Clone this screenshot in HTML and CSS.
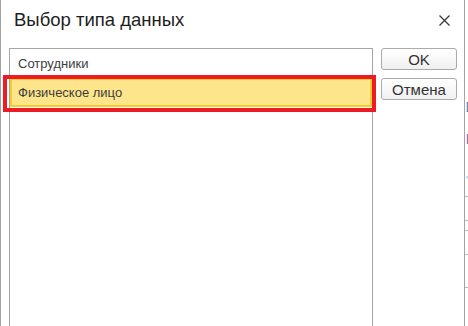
FILE: index.html
```html
<!DOCTYPE html>
<html>
<head>
  <meta charset="utf-8">
  <meta name="viewport" content="width=device-width">
  <title>Выбор типа данных</title>
  <link rel="stylesheet" href="styles.css">
</head>
<body>
  <div id="screen">
    <div id="dialog">
      <div class="head">
        <h1 class="title">Выбор типа данных</h1>
        <span class="close">
          <svg width="11" height="11" viewBox="0 0 11 11">
            <path d="M0.5 0.5L10.5 10.5M10.5 0.5L0.5 10.5" stroke="#3a3a3a" stroke-width="1.3" fill="none"/>
          </svg>
        </span>
      </div>
      <div class="body">
        <div class="list">
          <div class="row">Сотрудники</div>
          <div class="row selected">Физическое лицо</div>
        </div>
        <div class="actions">
          <button class="btn">OK</button>
          <button class="btn">Отмена</button>
        </div>
      </div>
    </div>
    <div class="edge">
      <span class="glyph blue">[</span>
      <span class="glyph purple">|</span>
      <span class="glyph light">'</span>
      <i class="tick"></i>
      <i class="tick"></i>
      <i class="tick"></i>
      <i class="tick"></i>
      <i class="tick"></i>
    </div>
    <!-- annotation over the selected row -->
    <div class="mark"></div>
  </div>
</body>
</html>
```

FILE: styles.css
```css
*{
  padding: 0;
  margin: 0;
  box-sizing: border-box;
}
body{
  background: #fff;
  font-family: "Liberation Sans", Arial, sans-serif;
}
#screen{
  position: relative;
  display: flex;
  width: 468px;
  height: 326px;
  overflow: hidden;
}
#dialog{
  display: flex;
  flex-direction: column;
  flex-shrink: 0;
  width: 465px;
  height: 100%;
  background: #fff;
  border-left: 1px solid #a3a3a3;
  border-right: 1px solid #a3a3a3;
}
.head{
  display: flex;
  flex-shrink: 0;
  justify-content: space-between;
  align-items: flex-start;
  height: 48px;
  padding: 9px 14px 0 13px;
}
.title{
  font-size: 18.5px;
  font-weight: normal;
  line-height: 22px;
  color: #1e1e1e;
}
.close{
  display: block;
  width: 11px;
  height: 11px;
  margin-top: 6px;
}
.close svg{
  display: block;
}
.body{
  display: flex;
  flex: 1;
  min-height: 0;
  gap: 8px;
  padding: 0 7px 0 8px;
}
.list{
  width: 364px;
  border: 1px solid #a6a6a6;
  border-bottom: none;
}
.row{
  height: 29px;
  line-height: 29px;
  padding-left: 8px;
  font-size: 13px;
  color: #3d3d3d;
}
.row.selected{
  padding-left: 6px;
  line-height: 25px;
  background: #fde58c;
  border: 2px solid #f7cb2c;
}
.actions{
  display: flex;
  flex-direction: column;
  gap: 8px;
}
.btn{
  width: 76px;
  height: 22px;
  font-family: "Liberation Sans", Arial, sans-serif;
  font-size: 15px;
  color: #333;
  background: linear-gradient(#ffffff, #f0f0f0);
  border: 1px solid #ababab;
  border-radius: 3px;
}
.edge{
  flex: 1;
  display: flex;
  flex-direction: column;
  overflow: hidden;
}
.glyph{
  display: block;
  font-size: 11px;
  line-height: 12px;
  padding-left: 1px;
}
.blue{
  color: #3a64b8;
  margin-top: 100px;
}
.purple{
  color: #7a3b9a;
  margin-top: 20px;
}
.light{
  color: #8fb5e0;
  margin-top: 30px;
}
.tick{
  display: block;
  height: 1px;
  background: #b8b8b8;
}
.tick:nth-of-type(1){ margin-top: 10px; }
.tick:nth-of-type(2){ margin-top: 23px; }
.tick:nth-of-type(3){ margin-top: 9px; }
.tick:nth-of-type(4){ margin-top: 23px; }
.tick:nth-of-type(5){ margin-top: 32px; }
.mark{
  position: absolute;
  left: 3px;
  top: 75px;
  width: 373px;
  height: 37px;
  border: 4px solid #ec1c24;
}
```
